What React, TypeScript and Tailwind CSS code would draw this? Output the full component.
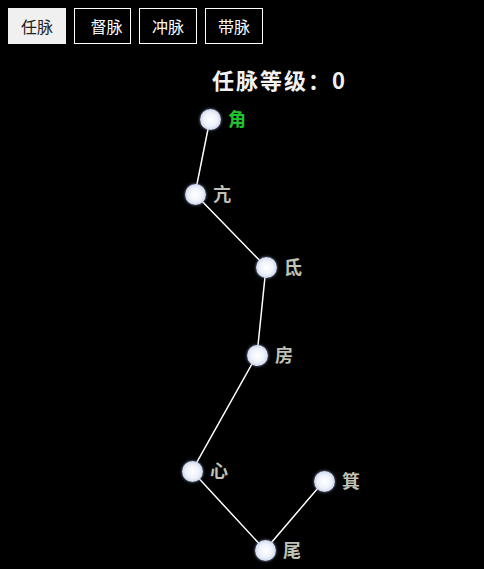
import React from 'react'

const TABS = [
  { label: '任脉', w: 'w-[58px]' },
  { label: '督脉', w: 'w-[57px] pl-[15px] pr-[7px]' },
  { label: '冲脉', w: 'w-[58px]' },
  { label: '带脉', w: 'w-[58px]' },
]

const STARS = [
  { name: '角', x: 210, y: 119, active: true },
  { name: '亢', x: 195, y: 194 },
  { name: '氐', x: 266, y: 267 },
  { name: '房', x: 257, y: 355 },
  { name: '心', x: 192, y: 471 },
  { name: '尾', x: 265, y: 550 },
  { name: '箕', x: 324, y: 481 },
]

const FONT = { fontFamily: '"Noto Sans CJK SC", "Liberation Sans", sans-serif' }

export default function App() {
  return (
    <main className="relative w-[484px] h-[569px] bg-black overflow-hidden" style={FONT}>
      <div className="flex gap-2 px-2 pt-2">
        {TABS.map((t, i) => (
          <button
            key={t.label}
            className={`h-[36px] px-[11px] text-[16px] leading-none border ${t.w} ${
              i === 0 ? 'bg-[#f0f0f0] text-[#222] border-[#f0f0f0]' : 'bg-black text-white border-white'
            }`}
          >
            {t.label}
          </button>
        ))}
      </div>

      <h1 className="ml-[212px] mt-[20px] text-[22px] leading-[30px] font-bold tracking-[2px] text-[#f2f2f2]">
        任脉等级：0
      </h1>

      {/* star chart */}
      <svg className="absolute left-0 top-0" width="484" height="569">
        <polyline
          points={STARS.map(s => `${s.x},${s.y}`).join(' ')}
          fill="none"
          stroke="#ffffff"
          strokeWidth="1.5"
        />
      </svg>
      {STARS.map(s => (
        <div key={s.name}>
          <div
            className="absolute w-[21px] h-[21px] rounded-full bg-[radial-gradient(circle,#ffffff_0%,#eef2fa_45%,#c9d3ea_75%,#7c8cb4_100%)] shadow-[0_0_3px_#8a98c0]"
            style={{ left: s.x - 10.5, top: s.y - 10.5 }}
          />
          <span
            className={`absolute text-[18px] leading-[24px] font-bold ${
              s.active ? 'text-[#1fc42a]' : 'text-[#bfc2b4]'
            }`}
            style={{ left: s.x + 18, top: s.y - 13 }}
          >
            {s.name}
          </span>
        </div>
      ))}
    </main>
  )
}
